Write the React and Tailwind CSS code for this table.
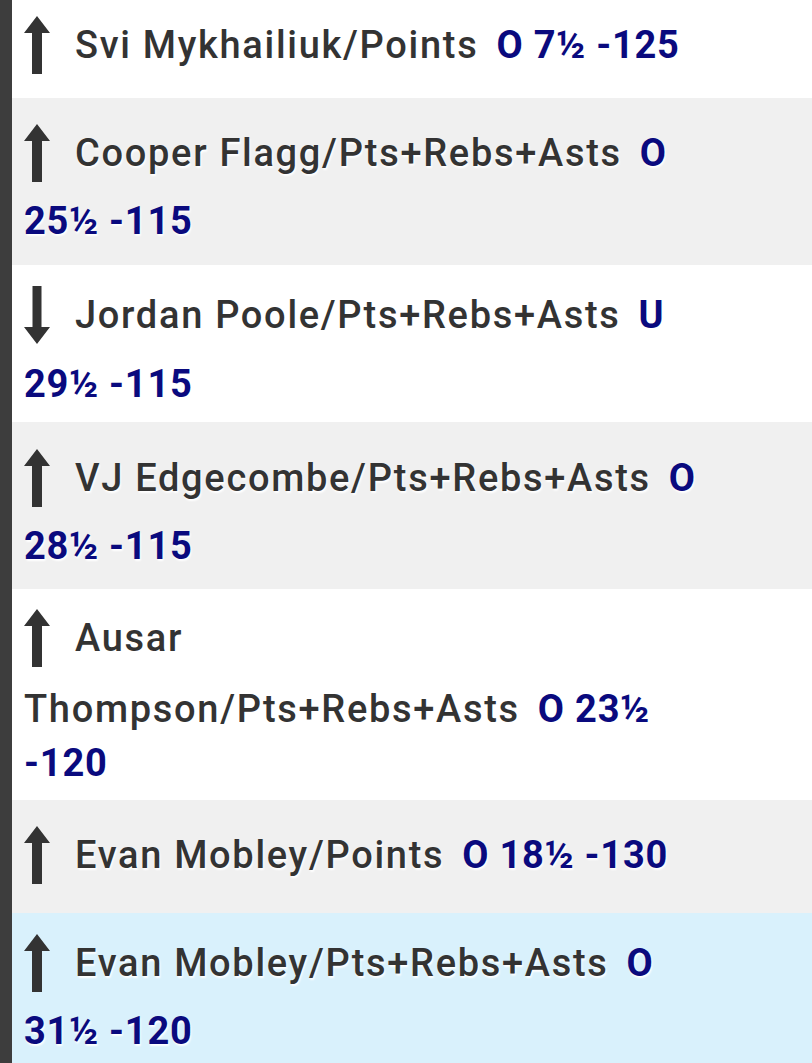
import React from "react";

function UpArrow() {
  return (
    <svg width="26" height="58" viewBox="0 0 26 58" className="shrink-0">
      <polygon points="13,0 26,17 18,17 18,58 8,58 8,17 0,17" fill="#333333" />
    </svg>
  );
}

function DownArrow() {
  return (
    <svg width="26" height="58" viewBox="0 0 26 58" className="shrink-0">
      <polygon points="8.5,0 17.5,0 17.5,41 26,41 13,58 0,41 8.5,41" fill="#333333" />
    </svg>
  );
}

const gray = "font-medium tracking-[1.7px] text-[#333333] [text-shadow:1px_2px_2px_#ffffff]";
const blue = "font-bold tracking-[0.8px] text-[#0a0a7e] [text-shadow:1px_2px_2px_#ffffff]";

function Line({ children }) {
  return <div className="flex h-[54px] items-center whitespace-nowrap">{children}</div>;
}

function Row({ bg, pt, gap, pb, arrow, lines }) {
  return (
    <div className={`${bg} pl-[12px]`} style={{ paddingTop: pt, paddingBottom: pb }}>
      <Line>
        {arrow === "down" ? <DownArrow /> : <UpArrow />}
        <span className="ml-[25px]">{lines[0]}</span>
      </Line>
      {lines.slice(1).map((l, i) => (
        <div key={i} style={{ marginTop: i === 0 ? gap : 0 }}>
          <Line>{l}</Line>
        </div>
      ))}
    </div>
  );
}

const N = ({ children }) => <span className={gray}>{children}</span>;
const B = ({ children, ml }) => (
  <span className={`${blue} ${ml ? "ml-[18px]" : ""}`}>{children}</span>
);

export default function App() {
  return (
    <div
      className="flex h-[1063px] w-[812px] overflow-hidden bg-white text-[38px] leading-none"
      style={{ fontFamily: "Roboto, 'Liberation Sans', sans-serif" }}
    >
      <div className="w-[12px] shrink-0 bg-[#3d3d3d]" />
      <div className="flex min-w-0 flex-1 flex-col">
        <Row
          bg="bg-white"
          pt={18}
          gap={0}
          pb={26}
          lines={[
            <>
              <N>Svi Mykhailiuk/Points</N>
              <B ml>O 7½ -125</B>
            </>,
          ]}
        />
        <Row
          bg="bg-[#f0f0f0]"
          pt={28}
          gap={14}
          pb={17}
          lines={[
            <>
              <N>Cooper Flagg/Pts+Rebs+Asts</N>
              <B ml>O</B>
            </>,
            <B>25½ -115</B>,
          ]}
        />
        <Row
          bg="bg-white"
          pt={23}
          gap={15}
          pb={11}
          arrow="down"
          lines={[
            <>
              <N>Jordan Poole/Pts+Rebs+Asts</N>
              <B ml>U</B>
            </>,
            <B>29½ -115</B>,
          ]}
        />
        <Row
          bg="bg-[#f0f0f0]"
          pt={29}
          gap={14}
          pb={16}
          lines={[
            <>
              <N>VJ Edgecombe/Pts+Rebs+Asts</N>
              <B ml>O</B>
            </>,
            <B>28½ -115</B>,
          ]}
        />
        <Row
          bg="bg-white"
          pt={22}
          gap={17}
          pb={10}
          lines={[
            <N>Ausar</N>,
            <>
              <N>Thompson/Pts+Rebs+Asts</N>
              <B ml>O 23½</B>
            </>,
            <B>-120</B>,
          ]}
        />
        <Row
          bg="bg-[#f0f0f0]"
          pt={28}
          gap={0}
          pb={31}
          lines={[
            <>
              <N>Evan Mobley/Points</N>
              <B ml>O 18½ -130</B>
            </>,
          ]}
        />
        <Row
          bg="bg-[#d9f1fc]"
          pt={23}
          gap={14}
          pb={17}
          lines={[
            <>
              <N>Evan Mobley/Pts+Rebs+Asts</N>
              <B ml>O</B>
            </>,
            <B>31½ -120</B>,
          ]}
        />
      </div>
    </div>
  );
}
